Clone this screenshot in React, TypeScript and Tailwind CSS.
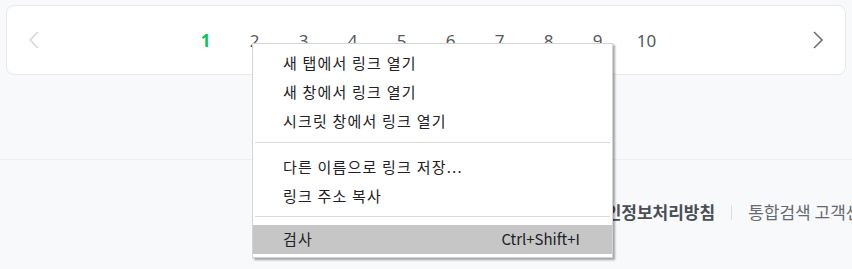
const PAGES = [1, 2, 3, 4, 5, 6, 7, 8, 9, 10];

const MENU_GROUPS = [
  ['새 탭에서 링크 열기', '새 창에서 링크 열기', '시크릿 창에서 링크 열기'],
  ['다른 이름으로 링크 저장...', '링크 주소 복사'],
];

function Chevron({ dir, className }: { dir: 'left' | 'right'; className?: string }) {
  return (
    <svg className={className} width="12" height="18" viewBox="0 0 12 18" fill="none" stroke="currentColor" strokeWidth={1.6}>
      {dir === 'left' ? <path d="M10 1 2 9l8 8" /> : <path d="M2 1l8 8-8 8" />}
    </svg>
  );
}

export default function App() {
  return (
    <div className="relative w-[852px] h-[269px] overflow-hidden bg-[#f8f9fb] font-['Noto_Sans','Noto_Sans_CJK_KR',sans-serif]">
      {/* pagination */}
      <div className="pt-[5px] px-[6px]">
        <div className="h-[70px] bg-white border border-[#e6e8ec] rounded-[8px] flex items-center px-[21px]">
          <Chevron dir="left" className="text-[#d6d8dc]" />
          <div className="flex-1 flex justify-center">
            {PAGES.map((p) => (
              <span
                key={p}
                className={
                  'w-[49px] text-center text-[17px] leading-none ' +
                  (p === 1 ? 'text-[#03c75a] font-bold' : 'text-[#55585d]')
                }
              >
                {p}
              </span>
            ))}
          </div>
          <Chevron dir="right" className="text-[#6b6e73]" />
        </div>
      </div>

      {/* footer */}
      <div className="mt-[84px] border-t border-[#eceef1] h-[110px] flex items-start pt-[40px] pl-[590px] text-[17px] leading-[24px] text-[#666a70] whitespace-nowrap font-['Noto_Sans_CJK_KR',sans-serif]">
        <span className="font-bold text-[#4a4e55]">개인정보처리방침</span>
        <span className="shrink-0 w-px h-[15px] bg-[#dcdee2] mx-[16px] mt-[5px]" />
        <span>통합검색 고객센터</span>
      </div>

      {/* context menu */}
      <div className="absolute left-[252px] top-[43px] w-[361px] bg-white border border-[#d4d4d4] shadow-[2px_2px_2px_rgba(0,0,0,0.35)] pt-[5px] pb-[3px] font-['Noto_Sans_CJK_KR',sans-serif] text-[15px] text-[#202124]">
        {MENU_GROUPS.map((group, gi) => (
          <div key={gi}>
            {group.map((item) => (
              <div key={item} className="h-[29px] flex items-center pl-[30px] tracking-[1.2px]">
                {item}
              </div>
            ))}
            <div className={gi === 0 ? 'pt-[6px] pb-[10px]' : 'pt-[5px] pb-[8px]'}>
              <div className="h-px bg-[#d9d9d9] mx-[2px]" />
            </div>
          </div>
        ))}
        <div className="h-[29px] flex items-center justify-between pl-[30px] pr-[32px] bg-[#c6c6c6]">
          <span className="tracking-[1.2px]">검사</span>
          <span>Ctrl+Shift+I</span>
        </div>
      </div>
    </div>
  );
}
